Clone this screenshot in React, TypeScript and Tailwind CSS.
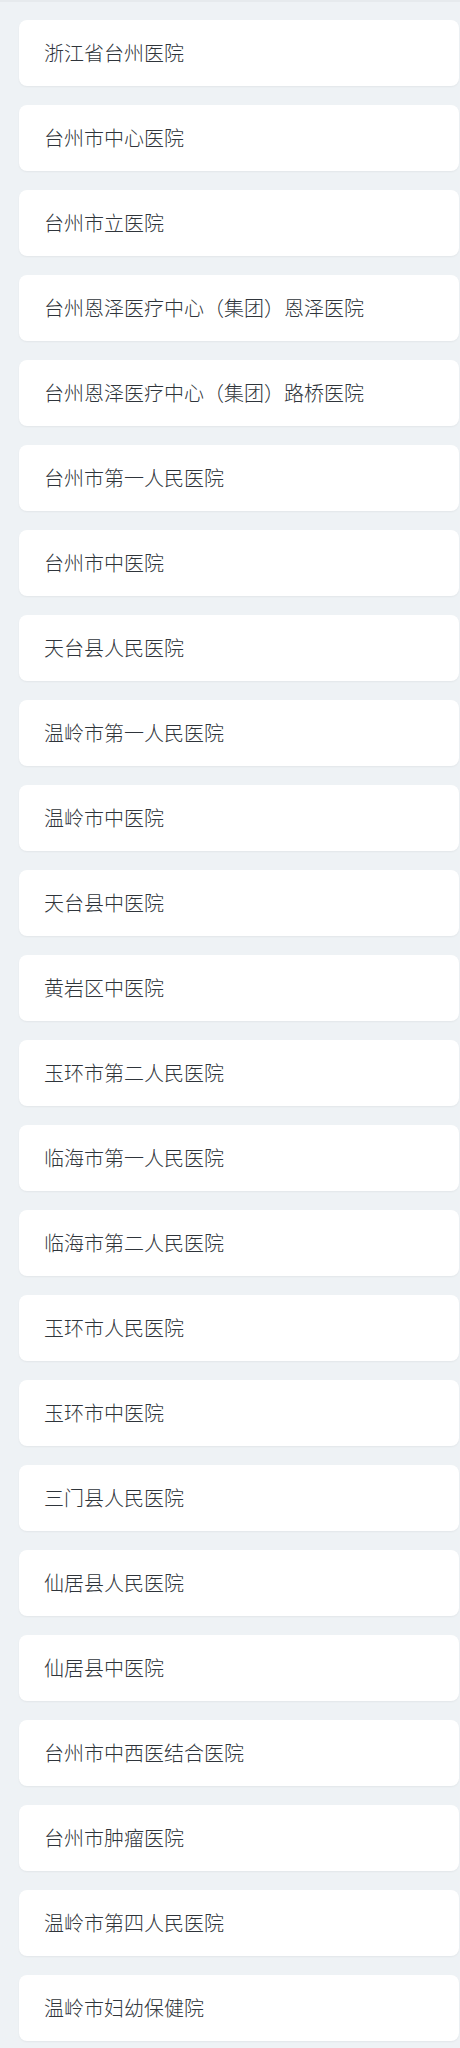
import React from "react";

const items = [
  "浙江省台州医院",
  "台州市中心医院",
  "台州市立医院",
  "台州恩泽医疗中心（集团）恩泽医院",
  "台州恩泽医疗中心（集团）路桥医院",
  "台州市第一人民医院",
  "台州市中医院",
  "天台县人民医院",
  "温岭市第一人民医院",
  "温岭市中医院",
  "天台县中医院",
  "黄岩区中医院",
  "玉环市第二人民医院",
  "临海市第一人民医院",
  "临海市第二人民医院",
  "玉环市人民医院",
  "玉环市中医院",
  "三门县人民医院",
  "仙居县人民医院",
  "仙居县中医院",
  "台州市中西医结合医院",
  "台州市肿瘤医院",
  "温岭市第四人民医院",
  "温岭市妇幼保健院",
];

export default function App() {
  return (
    <div
      className="min-h-[2048px] bg-[#eef2f5] border-t-2 border-[#e6eaed] pl-[19px] pr-px pt-[18px] pb-4 flex flex-col gap-[19px]"
      style={{ fontFamily: '"Noto Sans CJK SC", "Noto Sans", sans-serif' }}
    >
      {items.map((name) => (
        <div
          key={name}
          className="h-[66px] bg-white rounded-[8px] shadow-[0_1px_2px_rgba(0,0,0,0.05)] flex items-center pl-[25px] text-[20px] font-light text-[#2f353b] leading-none"
        >
          {name}
        </div>
      ))}
    </div>
  );
}
